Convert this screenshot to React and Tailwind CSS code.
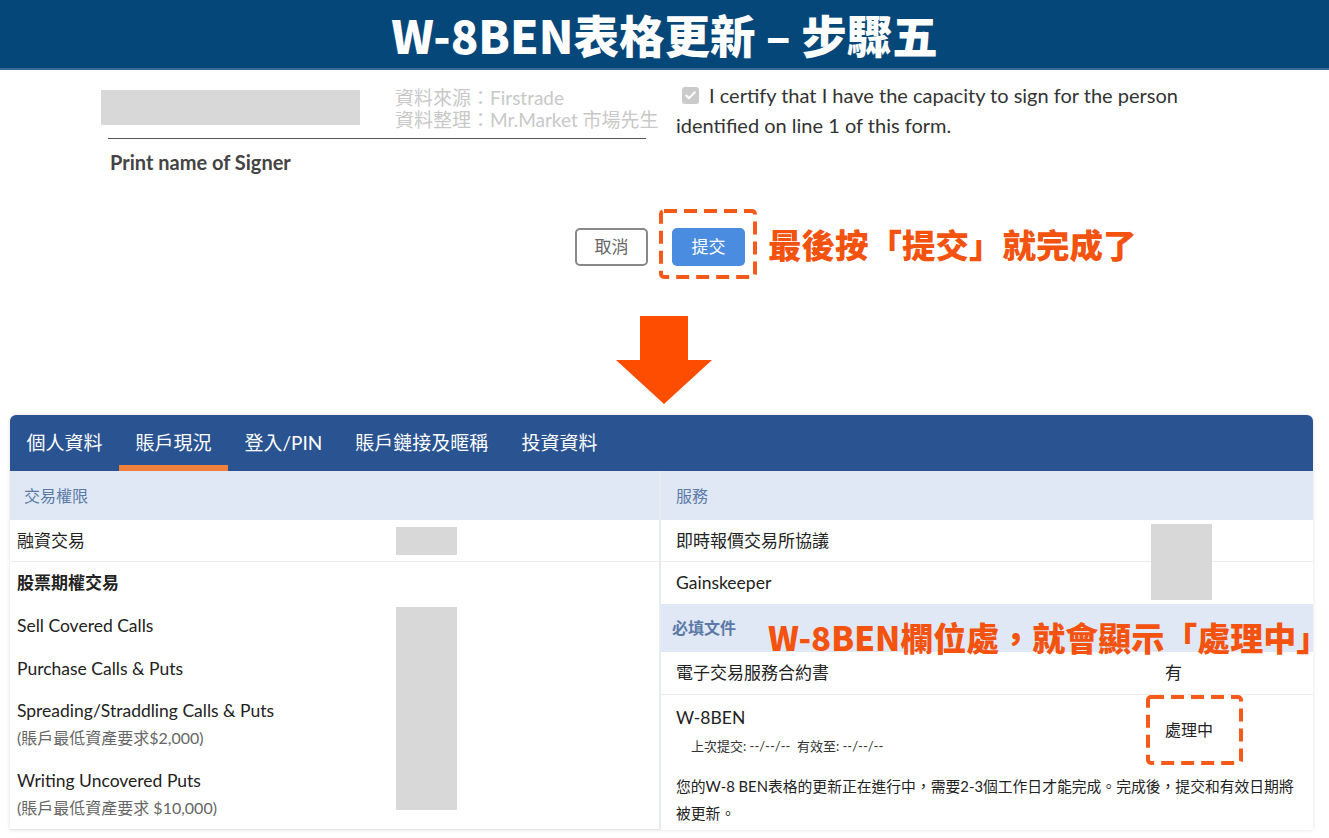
import { Check } from 'lucide-react';

const ORANGE = 'text-[#f4520f]';

const Redacted = ({ className = '' }) => <div className={`bg-[#d8d8d8] ${className}`} />;

// annotation frame: long orange dashes, drawn so the dash length matches the screenshot
function DashedBox({ className = '', children }) {
  return (
    <div className={`relative ${className}`}>
      <svg className="pointer-events-none absolute inset-0 h-full w-full overflow-visible">
        <rect
          x="2"
          y="2"
          width="calc(100% - 4px)"
          height="calc(100% - 4px)"
          rx="3"
          fill="none"
          stroke="#f55a1a"
          strokeWidth="4"
          strokeDasharray="13 7"
        />
      </svg>
      {children}
    </div>
  );
}

function DownArrow() {
  return (
    <svg width="96" height="88" viewBox="0 0 96 88" className="block">
      <path d="M24 0 H72 V44 H96 L48 88 L0 44 H24 Z" fill="#ff4d00" />
    </svg>
  );
}

const TABS = ['個人資料', '賬戶現況', '登入/PIN', '賬戶鏈接及暱稱', '投資資料'];

function TabBar() {
  return (
    <div className="flex h-[56px] items-stretch rounded-t-[6px] bg-[#2a5391]">
      {TABS.map((t, i) => (
        <div key={t} className="relative flex items-center px-[16.5px] text-[19px] text-white">
          {t}
          {i === 1 && <span className="absolute bottom-0 left-0 right-0 h-[6px] bg-[#f0803c]" />}
        </div>
      ))}
    </div>
  );
}

const SectionHead = ({ children, className = '' }) => (
  <div className={`flex items-center bg-[#dfe8f4] text-[16px] text-[#5b7aa8] ${className}`}>{children}</div>
);

function LeftColumn() {
  return (
    <div className="w-[651px] border-r-2 border-[#e6ecf3]">
      <SectionHead className="h-[49px] pl-[14px]">交易權限</SectionHead>
      <div className="flex h-[42px] items-center border-b border-[#ececec]">
        <div className="w-[386px] pl-[7px] text-[17px] text-[#222]">融資交易</div>
        <Redacted className="h-[28px] w-[61px]" />
      </div>
      <div className="flex border-b border-[#e6e6e6] pb-[8px]">
        <div className="w-[386px] pl-[7px] text-[17.5px] text-[#222]">
          <div className="h-[42px] text-[17px] font-bold leading-[42px]">股票期權交易</div>
          <div className="h-[43px] leading-[43px]">Sell Covered Calls</div>
          <div className="h-[43px] leading-[43px]">Purchase Calls &amp; Puts</div>
          <div className="pt-[7px]">
            <div className="leading-[28px]">Spreading/Straddling Calls &amp; Puts</div>
            <div className="text-[16px] leading-[26px] text-[#666]">(賬戶最低資產要求$2,000)</div>
          </div>
          <div className="pt-[16px]">
            <div className="leading-[28px]">Writing Uncovered Puts</div>
            <div className="text-[16px] leading-[26px] text-[#666]">(賬戶最低資產要求 $10,000)</div>
          </div>
        </div>
        <Redacted className="mt-[45px] h-[203px] w-[61px]" />
      </div>
    </div>
  );
}

function RightColumn() {
  return (
    <div className="relative w-[652px]">
      <SectionHead className="h-[49px] pl-[15px]">服務</SectionHead>
      <div className="relative">
        <div className="flex h-[42px] items-center border-b border-[#ececec] pl-[15px] text-[17px] text-[#222]">
          即時報價交易所協議
        </div>
        <div className="flex h-[42px] items-center pl-[15px] text-[17.5px] text-[#222]">Gainskeeper</div>
        <Redacted className="absolute left-[490px] top-[4px] h-[76px] w-[61px]" />
      </div>
      <div className="relative">
        <SectionHead className="h-[48px] pl-[11px] text-[15px] font-bold text-[#4b70a6]">必填文件</SectionHead>
        <div
          className={`absolute left-[107px] top-[13px] whitespace-nowrap font-['Noto_Sans_CJK_TC',sans-serif] text-[33px] font-black leading-[40px] ${ORANGE}`}
        >
          W-8BEN欄位處，就會顯示「處理中」
        </div>
      </div>
      <div className="flex h-[43px] items-center border-b border-[#ececec] text-[17px] text-[#222]">
        <div className="w-[504px] pl-[15px]">電子交易服務合約書</div>
        <div>有</div>
      </div>
      <div className="flex h-[70px]">
        <div className="w-[485px] pl-[15px] pt-[11px]">
          <div className="text-[17.5px] leading-[24px] text-[#222]">W-8BEN</div>
          <div className="pl-[15px] pt-[4px] text-[13px] leading-[24px] text-[#333]">
            上次提交: --/--/--&nbsp;&nbsp;有效至: --/--/--
          </div>
        </div>
        <DashedBox className="flex h-[70px] w-[97px] items-center pl-[19px] text-[16px] text-[#222]">處理中</DashedBox>
      </div>
      <div className="pl-[15px] pt-[8px] text-[14.8px] leading-[27px] text-[#222]">
        您的W-8 BEN表格的更新正在進行中，需要2-3個工作日才能完成。完成後，提交和有效日期將
        <br />
        被更新。
      </div>
    </div>
  );
}

export default function App() {
  return (
    <div className="h-[838px] w-[1329px] overflow-hidden bg-white font-[Lato,'Noto_Sans_CJK_TC',sans-serif] text-[#333]">
      <div className="flex h-[70px] items-center justify-center border-b-2 border-[#3c6d98] bg-[#06477a]">
        <h1 className="font-['Noto_Sans_CJK_TC',sans-serif] text-[45.5px] font-black leading-[60px] text-white">
          W-8BEN表格更新 – 步驟五
        </h1>
      </div>

      <div className="flex h-[139px]">
        <div className="w-[576px] pl-[101px] pt-[17px]">
          <div className="flex">
            <Redacted className="mt-[3px] h-[35px] w-[259px] shrink-0" />
            <div className="ml-[35px] whitespace-nowrap text-[19px] leading-[22px] text-[#c8c8c8]">
              <div>資料來源：Firstrade</div>
              <div>資料整理：Mr.Market 市場先生</div>
            </div>
          </div>
          <div className="ml-[7px] mt-[7px] w-[538px] border-t border-[#555]" />
          <div className="ml-[9px] mt-[11px] text-[20px] font-bold leading-[24px] text-[#444]">Print name of Signer</div>
        </div>
        <div className="ml-[100px] pt-[10px] text-[20px] leading-[30px] text-[#333]">
          <div className="flex items-center">
            <span className="ml-[6px] mr-[10px] flex h-[17px] w-[17px] items-center justify-center rounded-[3px] bg-[#cacaca]">
              <Check size={13} strokeWidth={3.5} className="text-white" />
            </span>
            I certify that I have the capacity to sign for the person
          </div>
          <div>identified on line 1 of this form.</div>
        </div>
      </div>

      <div className="flex h-[70px] items-center pl-[575px]">
        <button className="mt-[6px] h-[38px] w-[73px] rounded-[5px] border-2 border-[#888] bg-white text-[17px] text-[#666]">
          取消
        </button>
        <DashedBox className="ml-[11px] flex h-[70px] w-[98px] items-center pl-[13px]">
          <button className="mt-[6px] h-[38px] w-[73px] rounded-[5px] bg-[#4a8ce0] text-[17px] text-white">提交</button>
        </DashedBox>
        <div className={`ml-[11px] font-['Noto_Sans_CJK_TC',sans-serif] text-[33.5px] font-black ${ORANGE}`}>
          最後按「提交」就完成了
        </div>
      </div>

      <div className="ml-[616px] mt-[37px]">
        <DownArrow />
      </div>

      <div className="ml-[10px] mt-[11px] w-[1303px] rounded-t-[6px] shadow-[0_0_4px_rgba(0,0,0,0.12)]">
        <TabBar />
        <div className="flex">
          <LeftColumn />
          <RightColumn />
        </div>
      </div>
    </div>
  );
}
